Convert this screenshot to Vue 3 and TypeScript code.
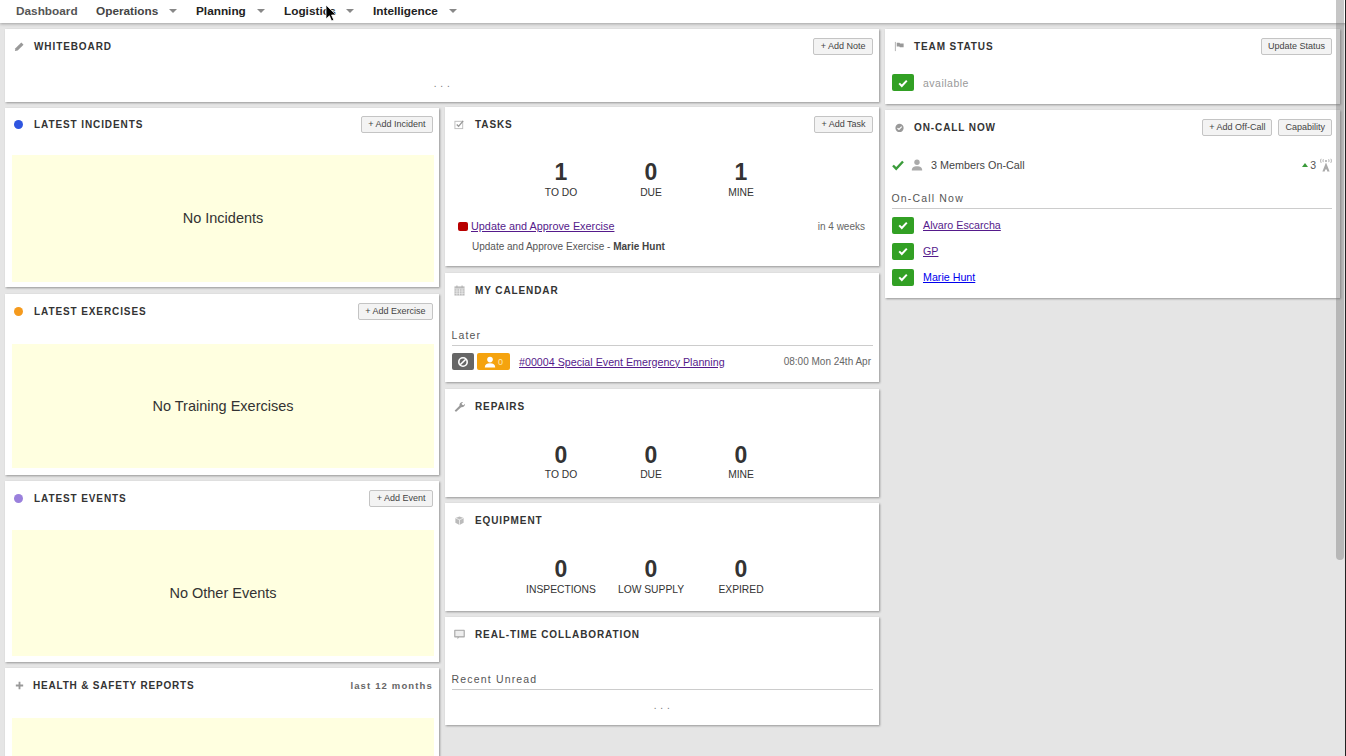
<script setup lang="ts">
interface Stat { value: number; label: string }
const taskStats: Stat[] = [
  { value: 1, label: 'TO DO' },
  { value: 0, label: 'DUE' },
  { value: 1, label: 'MINE' },
]
const repairStats: Stat[] = [
  { value: 0, label: 'TO DO' },
  { value: 0, label: 'DUE' },
  { value: 0, label: 'MINE' },
]
const equipStats: Stat[] = [
  { value: 0, label: 'INSPECTIONS' },
  { value: 0, label: 'LOW SUPPLY' },
  { value: 0, label: 'EXPIRED' },
]
const nav = [
  { label: 'Dashboard', caret: false, cls: 'n-dash' },
  { label: 'Operations', caret: true, cls: 'n-ops' },
  { label: 'Planning', caret: true, cls: 'n-plan' },
  { label: 'Logistics', caret: true, cls: 'n-log' },
  { label: 'Intelligence', caret: true, cls: 'n-int' },
]
const members = [
  { name: 'Alvaro Escarcha', visited: true },
  { name: 'GP', visited: true },
  { name: 'Marie Hunt', visited: false },
]
</script>

<template>
  <div class="page">
    <nav class="topbar">
      <div v-for="n in nav" :key="n.label" class="nav-item" :class="n.cls">
        <span>{{ n.label }}</span>
        <i v-if="n.caret" class="caret"></i>
      </div>
    </nav>

    <main class="board">
      <div class="left">
        <section class="card whiteboard">
          <header class="head">
            <svg class="ico" viewBox="0 0 12 12"><path d="M1 11l.6-3L8 1.600 10.400 4 4 10.400z" fill="#999"/></svg>
            <h2>WHITEBOARD</h2>
            <button class="btn">+ Add Note</button>
          </header>
          <div class="dots wb-dots">. . .</div>
        </section>

        <div class="cols">
          <div class="col">
            <section class="card c-inc">
              <header class="head">
                <i class="dot blue"></i>
                <h2>LATEST INCIDENTS</h2>
                <button class="btn">+ Add Incident</button>
              </header>
              <div class="empty e-inc">No Incidents</div>
            </section>
            <section class="card c-exe">
              <header class="head">
                <i class="dot orange"></i>
                <h2>LATEST EXERCISES</h2>
                <button class="btn">+ Add Exercise</button>
              </header>
              <div class="empty e-exe">No Training Exercises</div>
            </section>
            <section class="card c-evt">
              <header class="head">
                <i class="dot purple"></i>
                <h2>LATEST EVENTS</h2>
                <button class="btn">+ Add Event</button>
              </header>
              <div class="empty e-evt">No Other Events</div>
            </section>
            <section class="card c-hs">
              <header class="head">
                <svg class="ico" viewBox="0 0 12 12"><path d="M5 2h2v3h3v2H7v3H5V7H2V5h3z" fill="#999"/></svg>
                <h2 class="tight">HEALTH &amp; SAFETY REPORTS</h2>
                <span class="period">last 12 months</span>
              </header>
              <div class="empty e-hs"></div>
            </section>
          </div>

          <div class="col col-mid">
            <section class="card c-tasks">
              <header class="head">
                <svg class="ico" viewBox="0 0 12 12"><rect x="1" y="2.500" width="8.500" height="8" fill="none" stroke="#bbb"/><path d="M3 6l2 2 5-6" fill="none" stroke="#999" stroke-width="1.500"/></svg>
                <h2>TASKS</h2>
                <button class="btn">+ Add Task</button>
              </header>
              <div class="stats s-tasks">
                <div v-for="s in taskStats" :key="s.label" class="stat">
                  <b>{{ s.value }}</b><span>{{ s.label }}</span>
                </div>
              </div>
              <div class="task-row">
                <i class="red"></i>
                <a class="link visited task-link">Update and Approve Exercise</a>
                <span class="when">in 4 weeks</span>
              </div>
              <div class="task-sub">Update and Approve Exercise - <b>Marie Hunt</b></div>
            </section>

            <section class="card c-cal">
              <header class="head">
                <svg class="ico" viewBox="0 0 12 12"><path d="M.5 1.500h11v10H.5z" fill="#bbb"/><path d="M.5 4.200h11M3.200 4.200v7.300M6 4.200v7.300M8.800 4.200v7.300M.5 6.600h11M.5 9h11" stroke="#fff" stroke-width=".6"/><path d="M3.200 .5v2M8.800 .5v2" stroke="#aaa" stroke-width="1"/></svg>
                <h2>MY CALENDAR</h2>
              </header>
              <div class="sub-title cal-title">Later</div>
              <div class="cal-row">
                <span class="tag grey">
                  <svg viewBox="0 0 12 12" width="12" height="12"><circle cx="6" cy="6" r="4.200" fill="none" stroke="#fff" stroke-width="1.600"/><path d="M3.200 8.800l5.600-5.600" stroke="#fff" stroke-width="1.600"/></svg>
                </span>
                <span class="tag amber">
                  <svg viewBox="0 0 12 12" width="12" height="12"><circle cx="6" cy="3.600" r="2.800" fill="#fff"/><path d="M.8 11.500c0-3 2-4.200 5.200-4.200s5.200 1.200 5.200 4.200z" fill="#fff"/></svg>
                  <em>0</em>
                </span>
                <a class="link visited cal-link">#00004 Special Event Emergency Planning</a>
                <span class="when cal-when">08:00 Mon 24th Apr</span>
              </div>
            </section>

            <section class="card c-rep">
              <header class="head">
                <svg class="ico" viewBox="0 0 12 12"><path d="M1.200 11.200L.8 10.400 6 5.200C5.600 3.400 7 1 10 1.200L8.200 3l.8 1.200 1.400.4L12 3c.2 2.800-2.200 4.200-4.200 3.800L2.400 11.600z" fill="#999"/></svg>
                <h2>REPAIRS</h2>
              </header>
              <div class="stats s-rep">
                <div v-for="s in repairStats" :key="s.label" class="stat">
                  <b>{{ s.value }}</b><span>{{ s.label }}</span>
                </div>
              </div>
            </section>

            <section class="card c-eq">
              <header class="head">
                <svg class="ico" viewBox="0 0 12 12"><path d="M6 1.500l4.500 1.800v5.200L6 10.800 1.500 8.500V3.300z" fill="#bbb"/><path d="M1.500 3.300L6 5.200l4.500-1.900M6 5.200v5.600" stroke="#fff" stroke-width=".7" fill="none"/></svg>
                <h2>EQUIPMENT</h2>
              </header>
              <div class="stats s-eq">
                <div v-for="s in equipStats" :key="s.label" class="stat">
                  <b>{{ s.value }}</b><span>{{ s.label }}</span>
                </div>
              </div>
            </section>

            <section class="card c-col">
              <header class="head">
                <svg class="ico" viewBox="0 0 12 12"><path d="M1 .8h10a.8.8 0 0 1 .8.8v6.800a.8.8 0 0 1-.8.8H5.500L3.800 11.200V9.200H1a.8.8 0 0 1-.8-.8V1.600A.8.8 0 0 1 1 .8z" fill="#aaa"/><rect x="1.500" y="2" width="9" height="5.800" fill="#eee"/></svg>
                <h2>REAL-TIME COLLABORATION</h2>
              </header>
              <div class="sub-title col-title">Recent Unread</div>
              <div class="dots col-dots">. . .</div>
            </section>
          </div>
        </div>
      </div>

      <div class="right">
        <section class="card c-team">
          <header class="head">
            <svg class="ico" viewBox="0 0 12 12"><path d="M1.500 1v10" stroke="#999" stroke-width=".8"/><path d="M3 1.800h3l.6.8h3.900v4.200H6.400l-.6-.8H3z" fill="#999"/></svg>
            <h2>TEAM STATUS</h2>
            <button class="btn">Update Status</button>
          </header>
          <div class="status-row">
            <span class="ok"><svg viewBox="0 0 12 12" width="12" height="12"><path d="M2.200 6.400l2.600 2.600 5-5.400" fill="none" stroke="#fff" stroke-width="2"/></svg></span>
            <span class="avail">available</span>
          </div>
        </section>

        <section class="card c-oncall">
          <header class="head">
            <svg class="ico" viewBox="0 0 12 12"><circle cx="6" cy="6.500" r="4.500" fill="#999"/><path d="M3.800 6.600l1.600 1.600 3-3.200" fill="none" stroke="#fff" stroke-width="1.300"/></svg>
            <h2>ON-CALL NOW</h2>
            <button class="btn">+ Add Off-Call</button>
            <button class="btn cap">Capability</button>
          </header>
          <div class="summary">
            <svg class="chk" viewBox="0 0 12 12" width="12" height="12"><path d="M1 6.500l3.200 3.200L11 2.500" fill="none" stroke="#3a9b3a" stroke-width="2.400"/></svg>
            <svg class="usr" viewBox="0 0 12 12" width="12" height="12"><circle cx="6" cy="3.200" r="2.700" fill="#aaa"/><path d="M.8 11.500c0-3.200 2-4.200 5.200-4.200s5.200 1 5.200 4.200z" fill="#aaa"/></svg>
            <span class="sum-text">3 Members On-Call</span>
            <span class="sum-right">
              <i class="up"></i><span>3</span>
              <svg viewBox="0 0 14 14" width="14" height="14"><path d="M7 4.500l-3.600 9h2.300l.5-2h1.600l.5 2h2.300z" fill="#aaa"/><circle cx="7" cy="3" r="1" fill="#aaa"/><path d="M2.200 .8C1.400 2 1.400 3.500 2.200 4.800M11.800 .8c.8 1.200.8 2.700 0 4M4.400 1.300c-.5.8-.5 2 0 2.800M9.600 1.300c.5.8.5 2 0 2.800" fill="none" stroke="#aaa" stroke-width="1"/></svg>
            </span>
          </div>
          <div class="sub-title oc-title">On-Call Now</div>
          <ul class="members">
            <li v-for="m in members" :key="m.name">
              <span class="ok"><svg viewBox="0 0 12 12" width="12" height="12"><path d="M2.200 6.400l2.600 2.600 5-5.400" fill="none" stroke="#fff" stroke-width="2"/></svg></span>
              <a class="link" :class="m.visited ? 'visited' : 'fresh'">{{ m.name }}</a>
            </li>
          </ul>
        </section>
      </div>
    </main>

    <div class="scroll-track"><div class="scroll-thumb"></div></div>

    <svg class="cursor" viewBox="0 0 12 20" width="12" height="20"><path d="M1 1v14l3.400-3.200 2.200 5.200 2.200-1-2.200-5h4.600z" fill="#000" stroke="#fff" stroke-width=".8"/></svg>
  </div>
</template>

<style>
html, body { margin: 0; padding: 0; overflow: hidden; background: #e5e5e5; }
</style>

<style scoped>
.page {
  position: relative;
  width: 1346px;
  height: 756px;
  overflow: hidden;
  background: #e5e5e5;
  font-family: "Liberation Sans", Arial, sans-serif;
  color: #333;
}
.topbar {
  height: 21px;
  padding: 0 0 2px 16px;
  background: #fff;
  display: flex;
  align-items: center;
  box-shadow: 0 1px 3px rgba(0, 0, 0, .3);
  position: relative;
  z-index: 2;
}
.nav-item {
  display: flex;
  align-items: center;
  font-size: 11.800px;
  font-weight: 700;
  color: #222;
}
.n-dash { color: #555; width: 80px; }
.n-ops { color: #444; width: 100px; }
.n-plan { width: 88px; }
.n-log { width: 89px; }
.n-int { width: 84px; }
.caret {
  width: 0; height: 0;
  border-left: 4px solid transparent;
  border-right: 4px solid transparent;
  border-top: 4px solid #888;
  margin-left: auto;
  margin-right: 19px;
}
.n-int .caret { margin-right: 0; }

.board {
  display: flex;
  gap: 6px;
  padding: 6px 0 0 5px;
}
.left { width: 874px; display: flex; flex-direction: column; gap: 6px; flex: none; }
.cols { display: flex; gap: 6px; }
.col { width: 434px; display: flex; flex-direction: column; flex: none; }
.col-mid { margin-top: -1px; }
.right { width: 455px; display: flex; flex-direction: column; gap: 6px; flex: none; }

.card {
  background: #fff;
  box-shadow: 1px 1px 2px rgba(0, 0, 0, .35);
  box-sizing: border-box;
  flex: none;
  overflow: hidden;
}
.whiteboard { height: 73px; }
.c-inc { height: 179px; margin-bottom: 7px; }
.c-exe { height: 181px; margin-bottom: 6px; }
.c-evt { height: 181px; margin-bottom: 6px; }
.c-hs { height: 120px; }
.c-tasks { height: 159px; margin-bottom: 7px; }
.c-cal { height: 109px; margin-bottom: 7px; }
.c-rep { height: 108px; margin-bottom: 6px; }
.c-eq { height: 108px; margin-bottom: 6px; }
.c-col { height: 108px; }
.c-team { height: 75px; }
.c-oncall { height: 188px; }

.head {
  display: flex;
  align-items: center;
  height: 20px;
  padding: 7px 6px 0 9px;
}
.c-inc .head { padding-top: 6px; }
.right .head { padding-right: 8px; }
.head h2 {
  margin: 0;
  font-size: 10px;
  font-weight: 700;
  letter-spacing: .9px;
  color: #333;
  flex: 1;
  white-space: nowrap;
}
.head h2.tight { letter-spacing: .8px; margin-left: -1px; }
.col-mid .head h2 { margin-left: 1px; }
.ico { width: 11px; height: 11px; margin-right: 9px; flex: none; }
.dot { width: 9px; height: 9px; border-radius: 50%; margin: 0 11px 0 0; flex: none; }
.blue { background: #2f55e0; }
.orange { background: #f59a1d; }
.purple { background: #9a80dc; }
.btn {
  font: 9px "Liberation Sans", Arial, sans-serif;
  color: #444;
  height: 17px;
  padding: 0 6.500px;
  background: #f3f3f3;
  border: 1px solid #c4c4c4;
  border-radius: 2px;
  line-height: 15px;
  white-space: nowrap;
}
.right .btn { padding: 0 6px; }
.right .cap { margin-left: 6px; }
.period {
  font-size: 9.500px;
  font-weight: 700;
  letter-spacing: 1.150px;
  color: #666;
}
.dots { font-size: 10px; color: #777; text-align: center; letter-spacing: .5px; }
.wb-dots { margin-top: 22px; }
.empty {
  margin: 0 5px 0 7px;
  background: #ffffe0;
  display: flex;
  align-items: center;
  justify-content: center;
  font-size: 14.500px;
  color: #333;
}
.e-inc { height: 127px; margin-top: 21px; padding-bottom: 2px; box-sizing: border-box; }
.e-exe { height: 124px; margin-top: 23px; }
.e-evt { height: 126px; margin-top: 22px; }
.e-hs { height: 80px; margin-top: 23px; }

.stats { display: flex; padding-left: 71px; }
.stat { width: 90px; display: flex; flex-direction: column; align-items: center; flex: none; }
.stat b { font-size: 23px; line-height: 28px; color: #333; }
.stat span { font-size: 10.300px; line-height: 12px; color: #333; white-space: nowrap; }
.s-tasks { margin-top: 24px; }
.s-tasks .stat span, .s-eq .stat span { margin-top: 1px; }
.s-rep { margin-top: 25px; }
.s-eq { margin-top: 25px; }

.task-row { display: flex; align-items: center; margin: 21px 6px 0 13px; }
.red { width: 10px; height: 9px; background: #b80000; border-radius: 2px; margin-right: 3px; flex: none; }
.link { font-size: 10.700px; text-decoration: underline; cursor: pointer; white-space: nowrap; }
.task-link { font-size: 10.850px; }
.visited { color: #551a8b; }
.fresh { color: #0000ee; }
.when { margin-left: auto; margin-right: 8px; font-size: 10px; color: #666; }
.task-sub { margin: 9px 0 0 27px; font-size: 10px; color: #555; }
.task-sub b { color: #444; }

.sub-title {
  margin: 0 6px 0 7px;
  font-size: 10.500px;
  letter-spacing: 1.170px;
  text-indent: -.5px;
  color: #555;
  line-height: 12px;
  padding-bottom: 4px;
  border-bottom: 1px solid #ccc;
}
.cal-title { margin-top: 29px; }
.col-title { margin-top: 29px; }
.oc-title { margin: 20px 8px 0 7px; }
.col-dots { margin-top: 10px; }

.cal-row { display: flex; align-items: center; margin: 7px 8px 0 7px; }
.tag {
  height: 17px;
  border-radius: 2px;
  display: inline-flex;
  align-items: center;
  justify-content: center;
  flex: none;
}
.grey { width: 22px; background: #666; }
.amber { width: 33px; background: #f5a30e; margin-left: 3px; gap: 2px; }
.amber em { font-size: 9px; font-style: normal; color: #ffe8b0; }
.cal-link { margin-left: 9px; }
.cal-when { margin-right: 0; }

.status-row { display: flex; align-items: center; padding: 18px 0 0 7px; }
.ok {
  width: 22px;
  height: 17px;
  background: #32a024;
  border-radius: 2px;
  display: inline-flex;
  align-items: center;
  justify-content: center;
  flex: none;
}
.avail { margin-left: 9px; font-size: 10.500px; letter-spacing: .5px; color: #999; }
.summary { display: flex; align-items: center; margin: 21px 8px 0 7px; font-size: 10.800px; color: #444; }
.usr { margin-left: 7px; }
.sum-text { margin-left: 8px; }
.sum-right { margin-left: auto; display: flex; align-items: center; gap: 2px; font-size: 10.500px; color: #555; }
.sum-right svg { margin-left: 1px; margin-right: -1px; }
.up {
  width: 0; height: 0;
  border-left: 3px solid transparent;
  border-right: 3px solid transparent;
  border-bottom: 4px solid #3a9b3a;
}
.members { list-style: none; margin: 3px 0 0; padding: 0; }
.members li { display: flex; align-items: center; height: 26px; padding-left: 7px; }
.members .link { margin-left: 9px; }

.scroll-track {
  position: absolute;
  top: 0;
  right: 0;
  width: 10px;
  height: 756px;
  z-index: 3;
  box-sizing: border-box;
  border-right: 1px solid #222;
}
.scroll-thumb {
  position: absolute;
  left: 0;
  top: 0;
  width: 8px;
  height: 560px;
  border-radius: 0 0 4px 4px;
  background: rgba(120, 120, 120, .42);
}
.cursor { position: absolute; left: 325px; top: 4px; z-index: 5; }
</style>
